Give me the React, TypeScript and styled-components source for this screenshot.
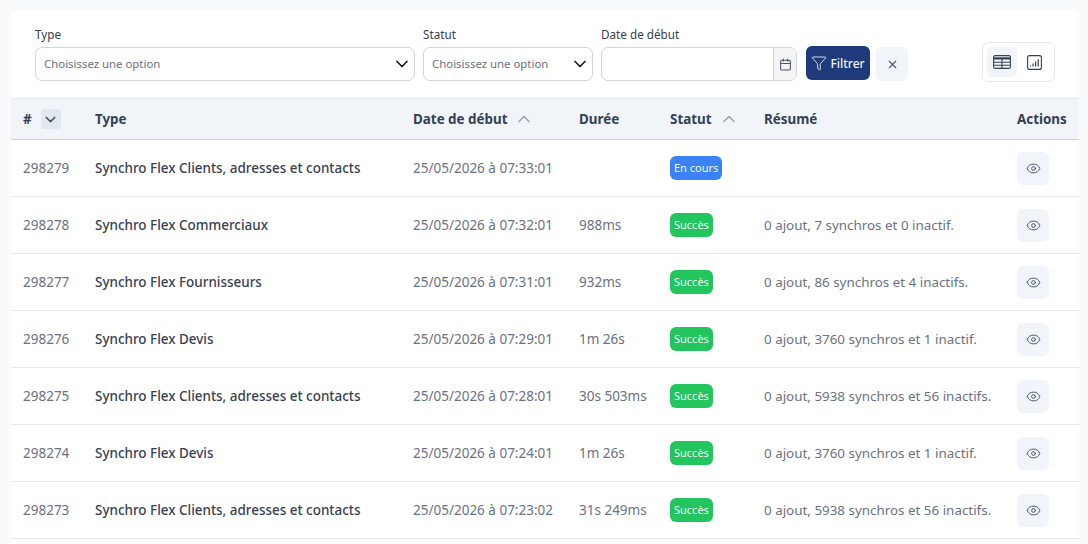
import styled, { createGlobalStyle } from "styled-components";
import { ChevronDown, ChevronUp, Calendar, Funnel, X, Eye } from "lucide-react";

const GlobalStyle = createGlobalStyle`
    html, body {
        margin: 0;
        height: 100%;
        overflow: hidden;
        background: #f8fafc;
        font-family: "Noto Sans", sans-serif;
    }
`

const Page = styled.div`
    padding: 10px 9px 0 11px;
`

const Card = styled.div`
    background: #fff;
    border-radius: 6px 6px 0 0;
    min-height: 534px;
`

const FilterBar = styled.div`
    display: flex;
    align-items: flex-end;
    height: 89px;
    padding: 0 24px 17px;
    box-sizing: border-box;
    border-bottom: 1px solid #e2e8f0;
`

const Field = styled.div<{ $width: number; $gap?: number }>`
    width: ${p => p.$width}px;
    margin-right: ${p => p.$gap ?? 8}px;
    flex: none;
`

const Label = styled.div`
    font-size: 11.7px;
    line-height: 16px;
    color: #374151;
    margin-bottom: 5px;
`

const SelectBox = styled.div`
    height: 34px;
    box-sizing: border-box;
    border: 1px solid #d1d5db;
    border-radius: 7px;
    background: #fff;
    display: flex;
    align-items: center;
    justify-content: space-between;
    padding: 0 2px 0 8px;
    font-size: 11.4px;
    line-height: 14px;
    color: #6b7280;
    svg { color: #111827; }
`

const DateBox = styled.div`
    height: 34px;
    box-sizing: border-box;
    border: 1px solid #d1d5db;
    border-radius: 7px;
    display: flex;
    justify-content: flex-end;
    overflow: hidden;
`

const DateAddon = styled.div`
    width: 23px;
    box-sizing: border-box;
    background: #f3f4f6;
    border-left: 1px solid #d1d5db;
    display: flex;
    align-items: center;
    justify-content: center;
    color: #4b5563;
`

const FilterButton = styled.button`
    width: 64px;
    height: 34px;
    margin-bottom: 1px;
    margin-right: 6px;
    flex: none;
    border: 0;
    border-radius: 6px;
    background: #1e3a7b;
    color: #f1f5f9;
    font: 500 12px "Noto Sans", sans-serif;
    display: flex;
    align-items: center;
    justify-content: center;
    gap: 3px;
    padding: 0;
`

const ClearButton = styled.button`
    width: 32px;
    height: 34px;
    flex: none;
    border: 0;
    border-radius: 6px;
    background: #f1f5f9;
    color: #475569;
    display: flex;
    align-items: center;
    justify-content: center;
    padding: 0;
`

const ViewToggle = styled.div`
    margin-left: auto;
    margin-bottom: -1px;
    width: 73px;
    height: 40px;
    box-sizing: border-box;
    border: 1px solid #e5e7eb;
    border-radius: 6px;
    display: flex;
    align-items: center;
    padding: 0 4px;
    gap: 2px;
`

const ViewButton = styled.div<{ $active?: boolean }>`
    width: 30px;
    height: 30px;
    border-radius: 5px;
    background: ${p => (p.$active ? "#f1f5f9" : "transparent")};
    color: #334155;
    display: flex;
    align-items: center;
    justify-content: center;
`

const Table = styled.table`
    width: 100%;
    table-layout: fixed;
    border-collapse: collapse;
`

const HeadCell = styled.th`
    height: 40px;
    padding: 0 0 0 12px;
    background: #f1f5f9;
    border-bottom: 1px solid #cbd5e1;
    text-align: left;
    font-size: 13.4px;
    font-weight: 700;
    color: #334155;
    white-space: nowrap;
`

const HeadInner = styled.div<{ $gap: number }>`
    display: flex;
    align-items: center;
    gap: ${p => p.$gap}px;
    svg { color: #94a3b8; }
`

const SortBox = styled.span`
    width: 20px;
    height: 20px;
    border-radius: 3px;
    background: #e2e8f0;
    display: flex;
    align-items: center;
    justify-content: center;
    svg { color: #475569; }
`

const Row = styled.tr`
    height: 57px;
    td { border-bottom: 1px solid #e5e7eb; }
`

const Cell = styled.td<{ $strong?: boolean; $size?: number }>`
    padding: 0 0 0 12px;
    font-size: ${p => p.$size ?? 13.5}px;
    font-weight: ${p => (p.$strong ? 500 : 400)};
    color: ${p => (p.$strong ? "#374151" : "#6b7280")};
    white-space: nowrap;
`

const Badge = styled.span<{ $color: string }>`
    display: inline-block;
    height: 24px;
    line-height: 24px;
    padding: 0 4px;
    border-radius: 6px;
    background: ${p => p.$color};
    color: #f0fdf4;
    font-size: 11px;
    vertical-align: middle;
`

const EyeButton = styled.div`
    width: 32px;
    height: 33px;
    border-radius: 6px;
    background: #f1f5f9;
    color: #475569;
    display: flex;
    align-items: center;
    justify-content: center;
`

function TableIcon() {
    return <svg width="18" height="14" viewBox="0 0 18 14" fill="none" stroke="currentColor" strokeWidth="1.1">
        <rect x="0.6" y="0.6" width="16.8" height="12.8" rx="1.5" />
        <path d="M0.6 3.4h16.8" strokeWidth="2.2" />
        <path d="M0.6 7.2h16.8M0.6 10.3h16.8M9 4v9.4" />
    </svg>
}

function ChartIcon() {
    return <svg width="15" height="15" viewBox="0 0 15 15" fill="none" stroke="currentColor">
        <rect x="0.6" y="0.6" width="13.8" height="13.8" rx="2" strokeWidth="1.1" />
        <path d="M3.6 11.6v-1M6 11.6v-3M8.6 11.6v-5M11.2 11.6v-7.4" strokeWidth="1.2" />
    </svg>
}

const rows = [
    { id: 298279, type: "Synchro Flex Clients, adresses et contacts", date: "25/05/2026 à 07:33:01", duration: "", running: true, summary: "" },
    { id: 298278, type: "Synchro Flex Commerciaux", date: "25/05/2026 à 07:32:01", duration: "988ms", summary: "0 ajout, 7 synchros et 0 inactif." },
    { id: 298277, type: "Synchro Flex Fournisseurs", date: "25/05/2026 à 07:31:01", duration: "932ms", summary: "0 ajout, 86 synchros et 4 inactifs." },
    { id: 298276, type: "Synchro Flex Devis", date: "25/05/2026 à 07:29:01", duration: "1m 26s", summary: "0 ajout, 3760 synchros et 1 inactif." },
    { id: 298275, type: "Synchro Flex Clients, adresses et contacts", date: "25/05/2026 à 07:28:01", duration: "30s 503ms", summary: "0 ajout, 5938 synchros et 56 inactifs." },
    { id: 298274, type: "Synchro Flex Devis", date: "25/05/2026 à 07:24:01", duration: "1m 26s", summary: "0 ajout, 3760 synchros et 1 inactif." },
    { id: 298273, type: "Synchro Flex Clients, adresses et contacts", date: "25/05/2026 à 07:23:02", duration: "31s 249ms", summary: "0 ajout, 5938 synchros et 56 inactifs." },
];

export default function App() {
    return <Page>
        <GlobalStyle />
        <Card>
            <FilterBar>
                <Field $width={380}>
                    <Label>Type</Label>
                    <SelectBox>Choisissez une option <ChevronDown size={20} strokeWidth={2} /></SelectBox>
                </Field>
                <Field $width={170}>
                    <Label>Statut</Label>
                    <SelectBox>Choisissez une option <ChevronDown size={20} strokeWidth={2} /></SelectBox>
                </Field>
                <Field $width={196} $gap={9}>
                    <Label>Date de début</Label>
                    <DateBox><DateAddon><Calendar size={13} /></DateAddon></DateBox>
                </Field>
                <FilterButton><Funnel size={16} strokeWidth={1.3} /> Filtrer</FilterButton>
                <ClearButton><X size={13} /></ClearButton>
                <ViewToggle>
                    <ViewButton $active><TableIcon /></ViewButton>
                    <ViewButton><ChartIcon /></ViewButton>
                </ViewToggle>
            </FilterBar>
            <Table>
                <colgroup>
                    <col style={{ width: 72 }} />
                    <col style={{ width: 318 }} />
                    <col style={{ width: 166 }} />
                    <col style={{ width: 91 }} />
                    <col style={{ width: 94 }} />
                    <col style={{ width: 253 }} />
                    <col style={{ width: 74 }} />
                </colgroup>
                <thead>
                    <tr>
                        <HeadCell><HeadInner $gap={9}># <SortBox><ChevronDown size={17} /></SortBox></HeadInner></HeadCell>
                        <HeadCell>Type</HeadCell>
                        <HeadCell><HeadInner $gap={7}>Date de début <ChevronUp size={20} strokeWidth={1.8} /></HeadInner></HeadCell>
                        <HeadCell>Durée</HeadCell>
                        <HeadCell><HeadInner $gap={7}>Statut <ChevronUp size={20} strokeWidth={1.8} /></HeadInner></HeadCell>
                        <HeadCell>Résumé</HeadCell>
                        <HeadCell>Actions</HeadCell>
                    </tr>
                </thead>
                <tbody>
                    {rows.map(row => <Row key={row.id}>
                        <Cell>{row.id}</Cell>
                        <Cell $strong $size={13.45}>{row.type}</Cell>
                        <Cell>{row.date}</Cell>
                        <Cell>{row.duration}</Cell>
                        <Cell>
                            <Badge $color={row.running ? "#3b82f6" : "#22c55e"}>{row.running ? "En cours" : "Succès"}</Badge>
                        </Cell>
                        <Cell $size={13.4}>{row.summary}</Cell>
                        <Cell><EyeButton><Eye size={15} strokeWidth={1.6} /></EyeButton></Cell>
                    </Row>)}
                </tbody>
            </Table>
        </Card>
    </Page>;
}
